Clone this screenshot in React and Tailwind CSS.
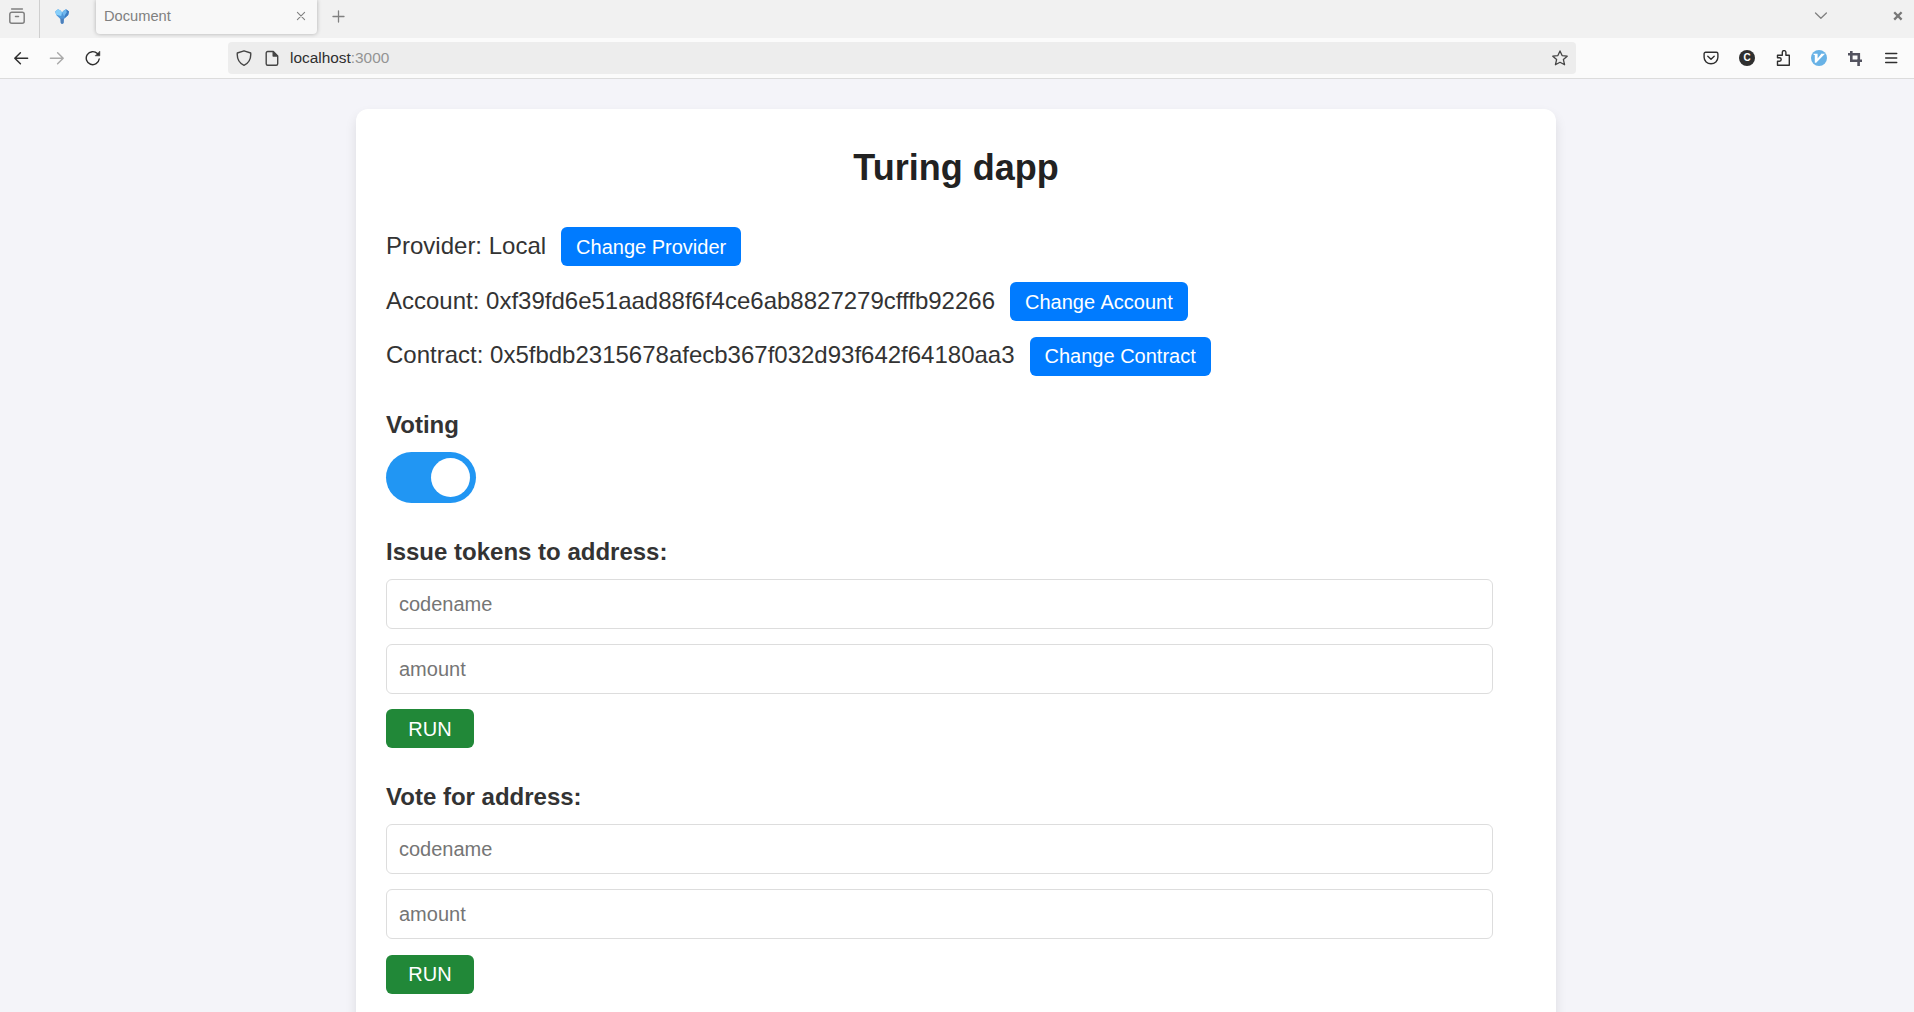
const stroke = { fill: "none", stroke: "currentColor", strokeLinecap: "round", strokeLinejoin: "round" };

function Icon({ className, w = 16, h = 16, sw = 1.4, children }) {
  return (
    <svg className={`shrink-0 ${className || ""}`} width={w} height={h} viewBox={`0 0 ${w} ${h}`} strokeWidth={sw} {...stroke}>
      {children}
    </svg>
  );
}

function TabStrip() {
  return (
    <div className="flex h-[38px] items-start bg-[#f1f1f1] text-[#808080]">
      <div className="flex h-full w-10 items-start border-r border-[#cfcfcf] pl-[9px] pt-2">
        <Icon sw={1.5}>
          <path d="M2.6 1h10.8M.8 6.2a2 2 0 0 1 2-2h10.4a2 2 0 0 1 2 2v7a2 2 0 0 1-2 2H2.8a2 2 0 0 1-2-2zM6.5 8.6h3" />
        </Icon>
      </div>
      <svg className="ml-[14px] mt-2 shrink-0" width="16" height="16" viewBox="0 0 16 16">
        <path d="M1.2 3.5 4 1.2l2.500 1.300L8 4.500l1.900-2L12 1.200l3 2.300-.8 3.400-4.200 4.100-.4 4.100L8 16l-1.200-1-.4-4L2.200 7z" fill="#4f97d9" />
        <path d="M1.200 3.500 4 1.200l2.500 1.300L8 4.500 7.200 8 2.200 6.800z" fill="#86cffb" />
        <path d="M12.500 1.500 15 3.500l-.8 3.400-3.500 3.200.3-5z" fill="#3d7bc0" />
        <path d="m10 2.500 2-1.300.8 3-2.600 4L8 4.500z" fill="#70b8ee" />
        <path d="m6.600 10 1.400 1 1.600-1-.1 5.200L8 16l-1.200-1z" fill="#4d7fba" />
      </svg>
      <div className="ml-[26px] flex h-[34px] w-[221px] items-center rounded-b-[4px] bg-[#f8f8f8] pb-[2px] pl-2 pr-[11px] text-[14.67px] shadow-[0_0_4px_rgba(0,0,0,0.28)]">
        <span className="grow leading-5">Document</span>
        <Icon w={10} h={10} sw={1.1}>
          <path d="m1.400 1.400 7.200 7.200m0-7.200L1.400 8.600" />
        </Icon>
      </div>
      <Icon className="ml-[15px] mt-[10px]" w={14} h={14} sw={1.3}>
        <path d="M6.500 1v11M1 6.500h11" />
      </Icon>
      <div className="grow" />
      <Icon className="mr-[65px] mt-3" w={14} h={8} sw={1.3}>
        <path d="m1.500 1 5.400 5.300L12.400 1" />
      </Icon>
      <svg className="mr-[11px] mt-[11px] shrink-0" width="10" height="10" viewBox="0 0 10 10" fill="none" stroke="#777" strokeWidth="2.3">
        <path d="m1.200 1.200 7.400 7.400m0-7.400L1.200 8.600" />
      </svg>
    </div>
  );
}

function NavBar() {
  return (
    <div className="flex h-[41px] items-center border-b border-[#dcdcdc] bg-[#fbfbfb] text-[#2f2f2f]">
      <Icon className="ml-[13px]" sw={1.5}>
        <path d="M14.600 8.300H1.800M7.400 2.700 1.800 8.300l5.600 5.500" />
      </Icon>
      <Icon className="ml-5 text-[#aaaaaa]" sw={1.5}>
        <path d="M1.400 8.300h12.800M8.600 2.700l5.600 5.600-5.600 5.500" />
      </Icon>
      <Icon className="ml-5" sw={1.4}>
        <path d="M14.200 9A6.500 6.500 0 1 1 12.400 3.600" />
        <path d="M14.800 1.500v4.300h-4.300z" fill="currentColor" strokeWidth=".6" />
      </Icon>
      <div className="ml-[127px] flex h-8 w-[1348px] items-center rounded-[4px] bg-[#ededed] px-2">
        <Icon sw={1.4} className="text-[#454545]">
          <path d="M8 .8 14.700 3c.4 5-1 9.700-6.700 12.300C2.300 12.700.9 8 1.300 3z" />
        </Icon>
        <Icon className="ml-3 text-[#454545]" sw={1.4}>
          <path d="M3.700 1.500h5.600l4.400 4.400v7.800a1.500 1.500 0 0 1-1.500 1.500H3.700a1.500 1.500 0 0 1-1.500-1.500V3a1.500 1.500 0 0 1 1.500-1.500z" />
          <path d="M9.200 2v4h4z" fill="currentColor" />
        </Icon>
        <span className="ml-[10px] grow text-[15.4px] leading-5">
          localhost<span className="text-[#949494]">:3000</span>
        </span>
        <Icon sw={1.3} className="text-[#454545]">
          <path d="m8 .9 2.100 4.700 5.100.6-3.800 3.400 1.200 5.200L8 12.300l-4.600 2.500 1.200-5.200L.8 6.200l5.100-.6z" />
        </Icon>
      </div>
      <div className="grow" />
      <div className="flex items-center gap-5 pr-[15px]">
        <Icon sw={1.4}>
          <path d="M2.600 2.300h10.800a1.500 1.500 0 0 1 1.500 1.500v3.500a6.900 6.500 0 0 1-13.800 0V3.800a1.500 1.500 0 0 1 1.500-1.500zM4.800 6.200 8 9.200l3.200-3" />
        </Icon>
        <span className="flex size-4 items-center justify-center rounded-full bg-[#2f2f2f] text-[10px] font-bold leading-4 text-white">C</span>
        <Icon sw={1.4}>
          <path d="M2.500 15.200h11.800V5.200h-3.400V2.400a1.800 1.800 0 0 0-3.600 0v2.800H2.500v2.600h2a1.700 1.700 0 0 1 0 3.400h-2z" />
        </Icon>
        <svg width="16" height="16" viewBox="0 0 16 16">
          <circle cx="8" cy="8" r="8" fill="#68b2e6" />
          <path d="M2.600 3.800h4v4.800l3.400-4.400V3.800h4L5.200 12.800H3.800V5H2.600z" fill="#fff" />
        </svg>
        <svg width="16" height="16" viewBox="0 0 16 16" fill="none" stroke="#53535f" strokeWidth="2.6">
          <path d="M1 4.200h10.800v7M4.300 1v9.800H15M11.600 9v7" />
        </svg>
        <Icon sw={1.5}>
          <path d="M2.700 3.500h11M2.700 8h11M2.700 12.500h11" />
        </Icon>
      </div>
    </div>
  );
}

function InfoRow({ label, action, textClass, buttonClass, className }) {
  return (
    <div className={`flex h-[39px] items-start gap-[15px] text-[24px] ${className}`}>
      <span className={textClass}>{label}</span>
      <button className={`h-[39px] rounded-[6px] bg-[#007bff] pl-[15px] text-left text-[20px] text-white ${buttonClass}`}>{action}</button>
    </div>
  );
}

function TokenForm({ title, className, runClass }) {
  return (
    <section className={className}>
      <h2 className="text-[24px] font-bold leading-9">{title}</h2>
      {["codename", "amount"].map((name, i) => (
        <input
          key={name}
          placeholder={name}
          className={`block h-[50px] w-[1107px] rounded-[6px] border border-[#dddddd] px-3 text-[20px] text-[#333] placeholder:text-[#757575] placeholder:opacity-100 ${i === 0 ? "mt-[9px]" : "mt-[15px]"}`}
        />
      ))}
      <button className={`block h-[39px] w-[88px] rounded-[6px] bg-[#218838] text-[20px] text-white ${runClass}`}>RUN</button>
    </section>
  );
}

export default function App() {
  return (
    <div className="h-[1012px] overflow-hidden bg-[#f4f4f9] font-['Liberation_Sans',Arial,sans-serif] text-[#333333]">
      <TabStrip />
      <NavBar />
      <main className="mx-auto mt-[30px] h-[960px] w-[1200px] -translate-x-px rounded-[12px] bg-white px-[30px] pt-8 shadow-[0_6px_12px_rgba(0,0,0,0.1)]">
        <h1 className="text-center text-[36px] font-bold leading-[54px] text-[#222222]">Turing dapp</h1>
        <InfoRow className="mt-8" textClass="leading-[38px]" buttonClass="w-[180px] leading-[41px]" label="Provider: Local" action="Change Provider" />
        <InfoRow className="mt-4" textClass="leading-[38px]" buttonClass="w-[178px] leading-[41px] [word-spacing:1px]" label="Account: 0xf39fd6e51aad88f6f4ce6ab8827279cfffb92266" action="Change Account" />
        <InfoRow className="mt-4" textClass="leading-9" buttonClass="w-[181px] leading-[39px]" label="Contract: 0x5fbdb2315678afecb367f032d93f642f64180aa3" action="Change Contract" />
        <h2 className="mt-[31px] text-[24px] font-bold leading-9">Voting</h2>
        <button role="switch" aria-checked="true" className="mt-[9px] flex h-[51px] w-[90px] items-center justify-end rounded-full bg-[#2196f3] pr-[6px]">
          <span className="size-[39px] rounded-full bg-white" />
        </button>
        <TokenForm className="mt-[31px]" title="Issue tokens to address:" runClass="mt-[15px] leading-[41px]" />
        <TokenForm className="mt-[31px]" title="Vote for address:" runClass="mt-4 leading-[39px]" />
      </main>
    </div>
  );
}
